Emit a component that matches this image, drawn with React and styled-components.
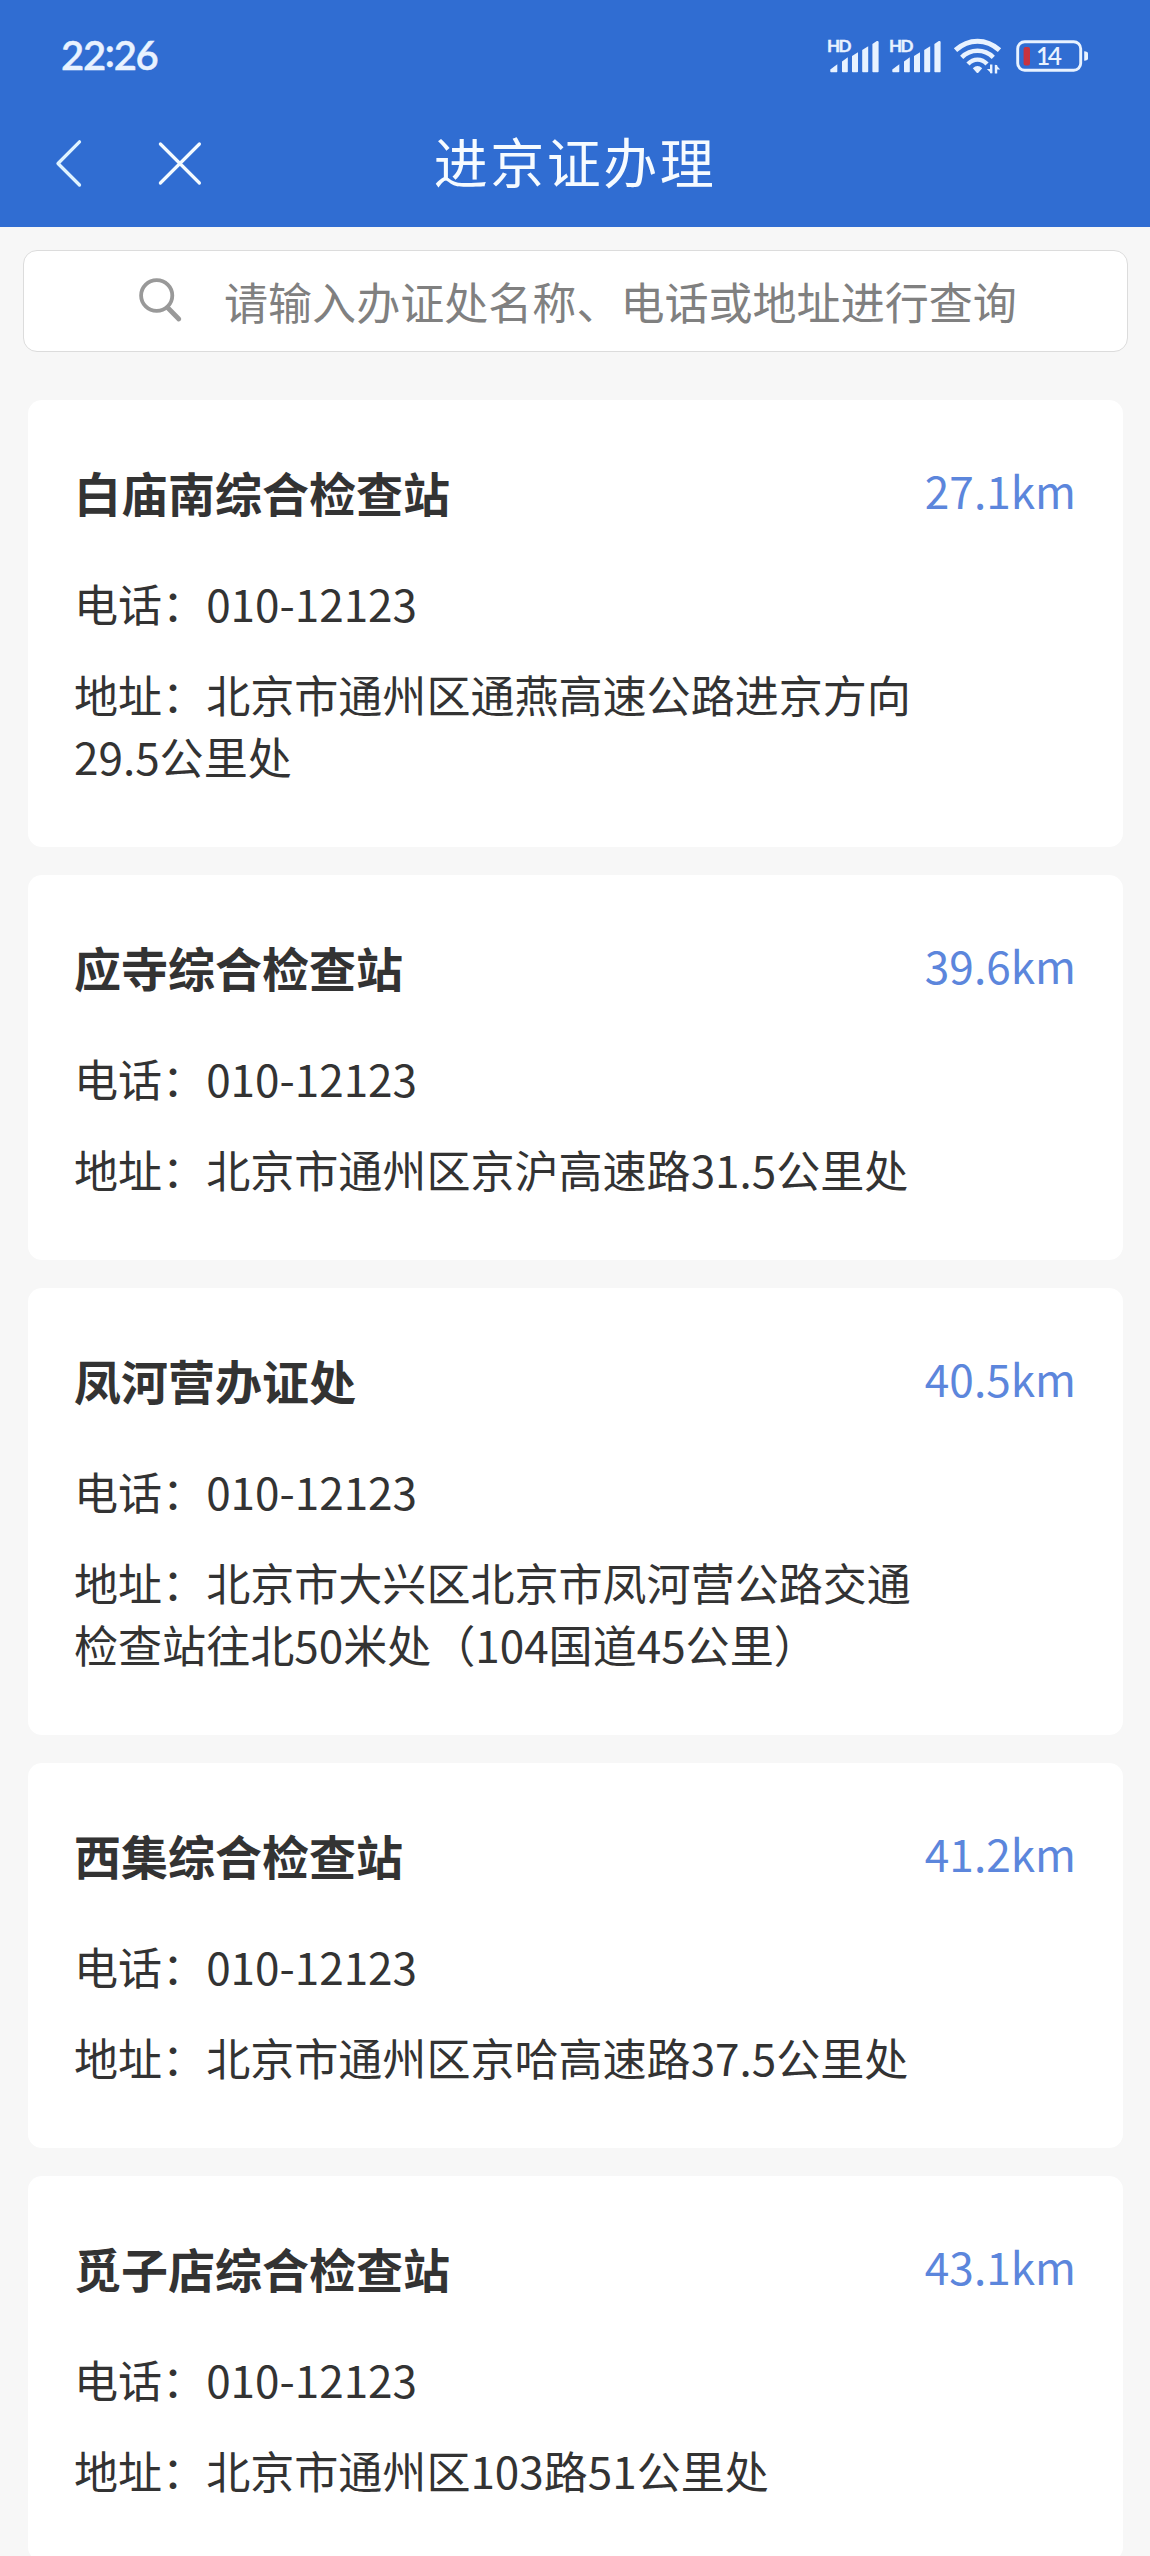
import React from "react";
import styled, { createGlobalStyle } from "styled-components";

const GlobalStyle = createGlobalStyle`
  * { box-sizing: border-box; }
  html, body { margin: 0; padding: 0; background: #f7f7f7; }
  body {
    height: 2556px;
    overflow: hidden;
    font-family: "Noto Sans CJK SC", "Noto Sans", sans-serif;
    color: #333;
  }
`;

const Page = styled.div`
  width: 1150px;
  height: 2556px;
  overflow: hidden;
  background: #f7f7f7;
`;

const Header = styled.header`
  height: 227px;
  background: #306dd2;
  color: #f6fbff;
`;

const StatusBar = styled.div`
  height: 98px;
  padding: 14px 61px 0 61px;
  display: flex;
  align-items: center;
  justify-content: space-between;
`;

const Clock = styled.span`
  padding-bottom: 2px;
  font-family: Lato, "Noto Sans", sans-serif;
  font-size: 40px;
  font-weight: 600;
  letter-spacing: -1.3px;
  line-height: 56px;
  color: #e8f2ff;
  -webkit-text-stroke: 0.4px #e8f2ff;
`;

const Colon = styled.span`
  vertical-align: 3px;
  line-height: 1;
`;

const Indicators = styled.div`
  display: flex;
  align-items: center;
`;

const Glyph = styled.svg`
  display: block;
  flex: none;
  overflow: visible;
  margin-right: ${(p) => p.$gap || 0}px;
`;

const NavBar = styled.nav`
  height: 129px;
  display: grid;
  grid-template-columns: 1fr auto 1fr;
  align-items: center;
`;

const NavActions = styled.div`
  display: flex;
  align-items: center;
  gap: 74px;
  padding-left: 54px;
`;

const NavButton = styled.button`
  display: block;
  padding: 0;
  border: 0;
  background: none;
  color: inherit;
`;

const PageTitle = styled.h1`
  margin: 0;
  padding-bottom: 3px;
  font-size: 54px;
  font-weight: 400;
  letter-spacing: 2.5px;
  line-height: 80px;
`;

const SearchBox = styled.div`
  margin: 23px 22px 0 23px;
  height: 102px;
  padding-left: 115px;
  display: flex;
  align-items: center;
  background: #fff;
  border: 1.5px solid #dcdcdc;
  border-radius: 14px;
`;

const Placeholder = styled.span`
  padding-left: 41px;
  font-size: 44.05px;
  line-height: 62px;
  color: #808080;
  white-space: nowrap;
`;

const List = styled.main`
  display: flex;
  flex-direction: column;
  gap: 28px;
  padding: 48.4px 27px 0 28px;
`;

const Card = styled.article`
  flex: none;
  padding: 58.5px 47px 59.6px 46px;
  background: #fff;
  border-radius: 14px;
`;

const CardHead = styled.div`
  display: flex;
  justify-content: space-between;
  align-items: center;
  height: 66px;
  margin-bottom: 48.4px;
`;

const Name = styled.h2`
  margin: 0;
  font-size: 47px;
  font-weight: 700;
  line-height: 66px;
`;

const Distance = styled.span`
  padding-bottom: 4px;
  font-size: 44.2px;
  line-height: 62px;
  color: #5c86dc;
`;

const Line = styled.p`
  width: 850px;
  margin: 0 0 ${(p) => (p.$last ? 0 : 28.7)}px;
  font-size: 44.05px;
  line-height: 61.9px;
`;

const stations = [
  { name: "白庙南综合检查站", km: "27.1km", address: "北京市通州区通燕高速公路进京方向29.5公里处" },
  { name: "应寺综合检查站", km: "39.6km", address: "北京市通州区京沪高速路31.5公里处" },
  { name: "凤河营办证处", km: "40.5km", address: "北京市大兴区北京市凤河营公路交通检查站往北50米处（104国道45公里）" },
  { name: "西集综合检查站", km: "41.2km", address: "北京市通州区京哈高速路37.5公里处" },
  { name: "觅子店综合检查站", km: "43.1km", address: "北京市通州区103路51公里处" },
];

const Signal = ({ gap }) => (
  <Glyph $gap={gap} width="52" height="36" viewBox="0 0 52 36" fill="#e8f2ff">
    <text x="-1" y="14.3" fontFamily="Lato, sans-serif" fontWeight="700" fontSize="17" textLength="24.5" stroke="#e8f2ff" strokeWidth="0.4">HD</text>
    <path d="M2.3 33.6V31.5L9.3 26.3V33.6Q9.3 34.3 8.6 34.3H3Q2.3 34.3 2.3 33.6Z" />
    <path d="M14 23.5L19.8 19.2V33.6Q19.8 34.3 19 34.3H14.8Q14 34.3 14 33.6Z" />
    <path d="M24 18L30 14.2V33.6Q30 34.3 29.2 34.3H24.8Q24 34.3 24 33.6Z" />
    <path d="M34.2 12L40.2 8.2V33.6Q40.2 34.3 39.4 34.3H35Q34.2 34.3 34.2 33.6Z" />
    <path d="M44.4 6L48.8 3.1Q50.6 2.4 50.6 4.2V33.6Q50.6 34.3 49.8 34.3H45.2Q44.4 34.3 44.4 33.6Z" />
  </Glyph>
);

const Wifi = () => (
  <Glyph $gap={14} width="49" height="36" viewBox="0 0 49 36" fill="none" stroke="#e8f2ff">
    <path d="M2.5 12.2Q12.5 3.3 24.5 3.3T46.5 12.2" strokeWidth="5" />
    <path d="M8.7 19.3Q15.5 12.8 24.5 12.8T40.3 19.3" strokeWidth="4.6" />
    <path d="M15 26Q19 21.6 24.5 21.6T34 26" strokeWidth="4.4" />
    <path d="M19.8 30.2Q24.5 25.8 29.2 30.2L25.5 34.4Q24.5 35.4 23.5 34.4Z" fill="#e8f2ff" stroke="none" />
    <path d="M38.2 26.5V35.3M43 35.6V27" strokeWidth="2.4" />
    <path d="M33.8 31H38.5V35.6ZM42.6 26.6V31.4H47.2Z" fill="#e8f2ff" stroke="none" />
  </Glyph>
);

const Battery = () => (
  <Glyph width="73" height="36" viewBox="0 0 73 36">
    <rect x="1.7" y="3.7" width="63" height="28.6" rx="7" fill="none" stroke="#e8f2ff" strokeWidth="2.9" />
    <rect x="7.6" y="9" width="6.4" height="18.6" rx="2" fill="#c8333f" />
    <path d="M68.2 13.2Q72 13.4 72 15.4V20.6Q72 22.6 68.2 22.8Z" fill="#e8f2ff" />
    <text x="33" y="26.8" textAnchor="middle" fontFamily="Lato, sans-serif" fontWeight="600" fontSize="24.5" textLength="26" fill="#e8f2ff">14</text>
  </Glyph>
);

export default function App() {
  return (
    <Page>
      <GlobalStyle />
      <Header>
        <StatusBar>
          <Clock>22<Colon>:</Colon>26</Clock>
          <Indicators>
            <Signal gap={9.3} />
            <Signal gap={11.5} />
            <Wifi />
            <Battery />
          </Indicators>
        </StatusBar>
        <NavBar>
          <NavActions>
            <NavButton aria-label="返回">
              <Glyph width="30" height="50" viewBox="0 0 30 50" fill="none" stroke="#dff3ff" strokeWidth="3.3" strokeLinecap="round" strokeLinejoin="round">
                <path d="M25.5 3.8L4 25.5L25.5 47" />
              </Glyph>
            </NavButton>
            <NavButton aria-label="关闭">
              <Glyph width="44" height="44" viewBox="0 0 44 44" fill="none" stroke="#f4fbff" strokeWidth="3.2" strokeLinecap="round">
                <path d="M2.4 3L41.4 42M41.4 3L2.4 42" />
              </Glyph>
            </NavButton>
          </NavActions>
          <PageTitle>进京证办理</PageTitle>
        </NavBar>
      </Header>
      <SearchBox>
        <Glyph width="44" height="46" viewBox="0 0 44 46" fill="none" stroke="#999" strokeLinecap="round">
          <ellipse cx="17.7" cy="17.5" rx="15.6" ry="15.4" strokeWidth="3.8" />
          <path d="M29 30L39.8 41" strokeWidth="4.8" />
        </Glyph>
        <Placeholder>请输入办证处名称、电话或地址进行查询</Placeholder>
      </SearchBox>
      <List>
        {stations.map((s) => (
          <Card key={s.name}>
            <CardHead>
              <Name>{s.name}</Name>
              <Distance>{s.km}</Distance>
            </CardHead>
            <Line>电话：010-12123</Line>
            <Line $last>{`地址：${s.address}`}</Line>
          </Card>
        ))}
      </List>
    </Page>
  );
}
